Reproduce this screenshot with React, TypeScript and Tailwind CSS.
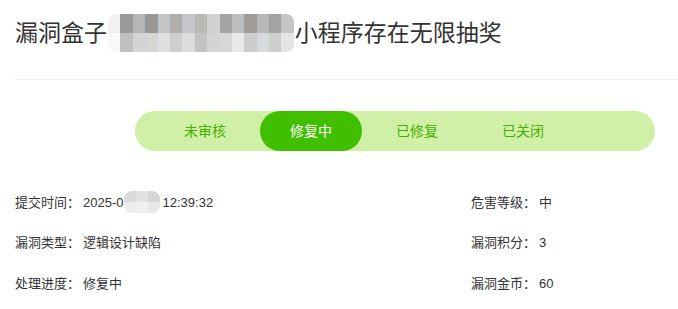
import React from "react";

const TABS = ["未审核", "修复中", "已修复", "已关闭"];
const ACTIVE = 1;

const TITLE_MOSAIC = [
  ["#f4f2f0", "#9c9a98", "#b4b6b8", "#9a9896", "#c2c4c6", "#b2aeac", "#c4c6c8", "#bcbab8", "#d2d0d0", "#a6a4a2", "#bebebe", "#a09c9a", "#b8b8b8", "#a2a4a4", "#c4c6c6"],
  ["#f8f8f6", "#c0c0c0", "#d2d4d6", "#d4d6d4", "#dedfe0", "#cfcdcd", "#dcdcdc", "#c4c2c2", "#d4d4d4", "#d6d8d8", "#e8e8e8", "#cfcdcb", "#d6dadc", "#ccd0cc", "#e4e4e4"],
];

const DATE_MOSAIC = [
  ["#dadada", "#e2e2e2", "#d6d6d6"],
  ["#ececec", "#f0f0f0", "#e8e8e8"],
];

function Mosaic({ cells, cell }: { cells: string[][]; cell: string }) {
  return (
    <span className="inline-flex flex-col overflow-hidden rounded-[8px] align-middle blur-[0.6px]">
      {cells.map((row, r) => (
        <span key={r} className="flex">
          {row.map((c, i) => (
            <span key={i} className={cell} style={{ background: c }} />
          ))}
        </span>
      ))}
    </span>
  );
}

function Field({ label, children }: { label: string; children: React.ReactNode }) {
  return (
    <div className="flex h-[40.5px] items-center text-[13px] text-[#333]">
      <span>{label}：</span>
      <span className="ml-[3px] flex items-center">{children}</span>
    </div>
  );
}

export default function App() {
  return (
    <div
      className="h-[309px] w-[678px] bg-white"
      style={{ fontFamily: '"Liberation Sans", "Noto Sans CJK SC", sans-serif' }}
    >
      <div className="pl-[15px]">
        <h1 className="flex h-[64px] items-center pt-[2px] text-[23px] font-normal text-[#333]">
          <span>漏洞盒子</span>
          <span className="mx-[1px]">
            <Mosaic cells={TITLE_MOSAIC} cell="h-[19px] w-[12.4px]" />
          </span>
          <span>小程序存在无限抽奖</span>
        </h1>
        <div className="mt-[15px] h-px bg-[#eeeeee]" />
      </div>

      <div className="mt-[31px] flex pl-[135px]">
        <div className="flex h-[40px] w-[520px] items-center rounded-full bg-[#d0f0a8] pl-[19px]">
          {TABS.map((t, i) => (
            <div
              key={t}
              className={`mr-[4px] flex h-[40px] w-[102px] items-center justify-center rounded-full text-[14px] ${
                i === ACTIVE ? "bg-[#40bf00] text-white" : "text-[#4aae00]"
              }`}
            >
              {t}
            </div>
          ))}
        </div>
      </div>

      <div className="mt-[31px] flex px-[15px]">
        <div className="flex-1">
          <Field label="提交时间">
            <span>2025-0</span>
            <Mosaic cells={DATE_MOSAIC} cell="h-[11px] w-[12px]" />
            <span className="ml-[3px]">12:39:32</span>
          </Field>
          <Field label="漏洞类型">逻辑设计缺陷</Field>
          <Field label="处理进度">修复中</Field>
        </div>
        <div className="w-[192px]">
          <Field label="危害等级">中</Field>
          <Field label="漏洞积分">3</Field>
          <Field label="漏洞金币">60</Field>
        </div>
      </div>
    </div>
  );
}
